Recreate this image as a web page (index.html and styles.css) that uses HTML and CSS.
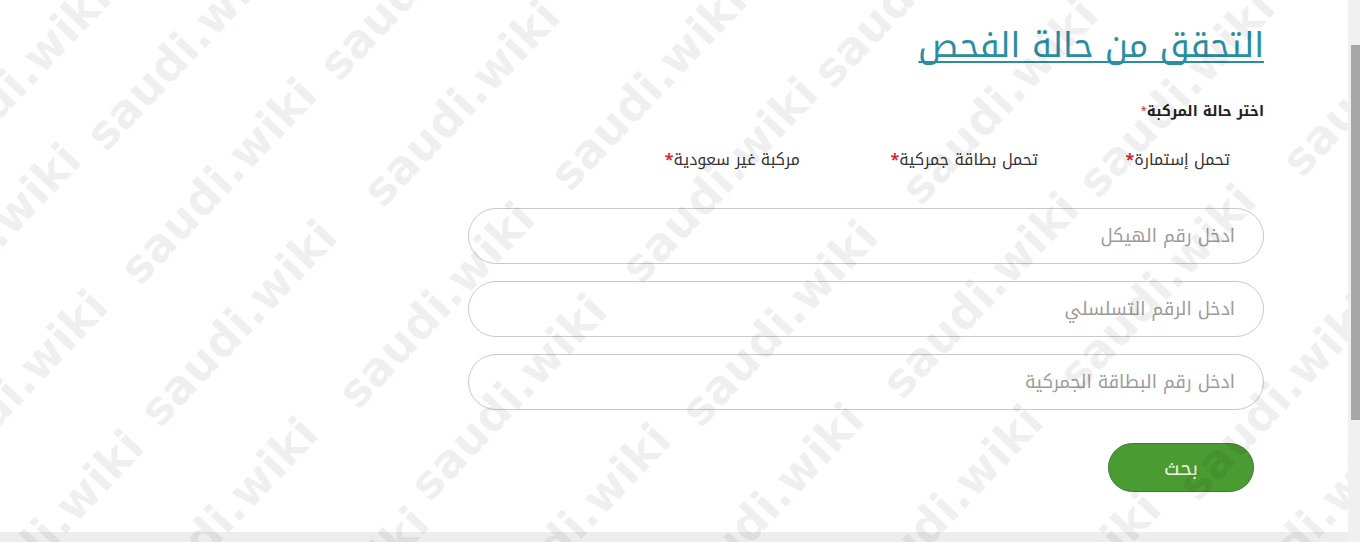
FILE: index.html
```html
<!DOCTYPE html>
<html lang="ar">
<head>
<meta charset="utf-8">
<title>التحقق من حالة الفحص</title>
<link rel="stylesheet" href="styles.css">
</head>
<body>
<div class="page">
  <div class="viewport">
    <main class="content">
      <form class="check-form" dir="rtl">
        <h1 class="title"><a href="#">التحقق من حالة الفحص</a></h1>
        <div class="label">اختر حالة المركبة<span class="req-small">*</span></div>
        <div class="options">
          <label class="opt opt-1"><input type="radio" name="status">تحمل إستمارة<span class="req">*</span></label>
          <label class="opt opt-2"><input type="radio" name="status">تحمل بطاقة جمركية<span class="req">*</span></label>
          <label class="opt opt-3"><input type="radio" name="status">مركبة غير سعودية<span class="req">*</span></label>
        </div>
        <div class="fields">
          <input class="field" type="text" placeholder="ادخل رقم الهيكل">
          <input class="field" type="text" placeholder="ادخل الرقم التسلسلي">
          <input class="field" type="text" placeholder="ادخل رقم البطاقة الجمركية">
        </div>
        <div class="actions"><button class="btn" type="button">بحث</button></div>
      </form>
    </main>
    <div class="footer-band"></div>
    <div class="watermarks" aria-hidden="true">
      <span class="wm w1">saudi.wiki</span>
      <span class="wm w2">saudi.wiki</span>
      <span class="wm w3">saudi.wiki</span>
      <span class="wm w4">saudi.wiki</span>
      <span class="wm w5">saudi.wiki</span>
      <span class="wm w6">saudi.wiki</span>
      <span class="wm w7">saudi.wiki</span>
      <span class="wm w8">saudi.wiki</span>
      <span class="wm w9">saudi.wiki</span>
      <span class="wm w10">saudi.wiki</span>
      <span class="wm w11">saudi.wiki</span>
      <span class="wm w12">saudi.wiki</span>
      <span class="wm w13">saudi.wiki</span>
      <span class="wm w14">saudi.wiki</span>
      <span class="wm w15">saudi.wiki</span>
      <span class="wm w16">saudi.wiki</span>
      <span class="wm w17">saudi.wiki</span>
      <span class="wm w18">saudi.wiki</span>
      <span class="wm w19">saudi.wiki</span>
      <span class="wm w20">saudi.wiki</span>
      <span class="wm w21">saudi.wiki</span>
      <span class="wm w22">saudi.wiki</span>
      <span class="wm w23">saudi.wiki</span>
      <span class="wm w24">saudi.wiki</span>
      <span class="wm w25">saudi.wiki</span>
      <span class="wm w26">saudi.wiki</span>
      <span class="wm w27">saudi.wiki</span>
      <span class="wm w28">saudi.wiki</span>
    </div>
  </div>
  <div class="scrollbar"><div class="thumb"></div></div>
</div>
</body>
</html>
```

FILE: styles.css
```css
* { box-sizing: border-box; }

html, body {
  margin: 0;
  padding: 0;
  height: 100%;
  overflow: hidden;
  background: #ffffff;
}

body {
  font-family: "Noto Kufi Arabic", "Noto Sans Arabic", "DejaVu Sans", sans-serif;
  color: #333333;
}

.page {
  display: flex;
  width: 1360px;
  height: 542px;
}

.viewport {
  position: relative;
  flex: 1;
  display: flex;
  flex-direction: column;
  overflow: hidden;
}

.content {
  flex: 1;
  display: flex;
  justify-content: flex-end;
  padding-right: 84px;
  padding-top: 24px;
}

.check-form {
  width: 796px;
  display: flex;
  flex-direction: column;
}

.title {
  margin: 0;
  font-size: 34px;
  font-weight: normal;
  line-height: 44px;
  height: 44px;
}

.title a {
  color: #2a8da3;
  text-decoration: underline;
  text-decoration-thickness: 2px;
  text-underline-offset: 4px;
  text-decoration-skip-ink: none;
}

.label {
  margin-top: 33px;
  font-size: 14.5px;
  font-weight: bold;
  line-height: 20px;
  color: #222222;
}

.req-small {
  color: #d7262b;
  font-weight: normal;
  font-size: 11px;
  vertical-align: top;
}

.options {
  margin-top: 29px;
  display: flex;
  padding-right: 34px;
  line-height: 20px;
  font-size: 16px;
  color: #333333;
}

.opt {
  display: block;
}

.opt input {
  display: none;
}

.opt-1 { width: 192px; }
.opt-2 { width: 238px; }

.req {
  color: #d7262b;
  font-weight: bold;
  font-size: 16px;
}

.fields {
  margin-top: 38px;
  display: flex;
  flex-direction: column;
  gap: 17px;
}

.field {
  display: block;
  width: 796px;
  height: 56px;
  border: 1px solid #c9c9c9;
  border-radius: 28px;
  padding: 0 28px;
  font-family: inherit;
  font-size: 18px;
  color: #333333;
  background: transparent;
  outline: none;
}

.field::placeholder {
  color: #9b9b9b;
}

.actions {
  margin-top: 33px;
  display: flex;
  padding-right: 10px;
}

.btn {
  width: 146px;
  height: 49px;
  border: 1px solid #3c7a3a;
  border-radius: 25px;
  background: #4a9b32;
  color: #e9f4df;
  font-family: inherit;
  font-size: 20px;
  line-height: 1;
  cursor: pointer;
}

.footer-band {
  height: 10px;
  background: #ededed;
}

.scrollbar {
  width: 12px;
  background: #f0f0f0;
  padding-top: 45px;
  padding-left: 3px;
}

.thumb {
  width: 9px;
  height: 375px;
  background: #a6a6a6;
}

/* watermark overlay */
.watermarks {
  position: absolute;
  inset: 0;
  pointer-events: none;
  overflow: hidden;
}

.wm {
  position: absolute;
  font-family: "DejaVu Sans", sans-serif;
  font-weight: bold;
  font-size: 46px;
  line-height: 1;
  color: rgba(0, 0, 0, 0.07);
  white-space: nowrap;
  transform: translate(-50%, -50%) rotate(-46.6deg);
}

.w1  { left: 12px;   top: 84px; }
.w2  { left: 184px;  top: 47px; }
.w3  { left: 218px;  top: 181px; }
.w4  { left: 417px;  top: -23px; }
.w5  { left: 461px;  top: 103px; }
.w6  { left: -18px;  top: 246px; }
.w7  { left: 238px;  top: 323px; }
.w8  { left: 9px;    top: 393px; }
.w9  { left: 436px;  top: 305px; }
.w10 { left: 45px;   top: 533px; }
.w11 { left: 219px;  top: 520px; }
.w12 { left: 508px;  top: 397px; }
.w13 { left: 648px;  top: 87px; }
.w14 { left: 719px;  top: 180px; }
.w15 { left: 911px;  top: -16px; }
.w16 { left: 779px;  top: 323px; }
.w17 { left: 572px;  top: 526px; }
.w18 { left: 765px;  top: 506px; }
.w19 { left: 999px;  top: 101px; }
.w20 { left: 1176px; top: 94px; }
.w21 { left: 1380px; top: 73px; }
.w22 { left: 980px;  top: 295px; }
.w23 { left: 1157px; top: 287px; }
.w24 { left: 1276px; top: 397px; }
.w25 { left: 944px;  top: 508px; }
.w26 { left: 1310px; top: 525px; }
.w27 { left: 1062px; top: 595px; }
.w28 { left: 330px;  top: 610px; }
```
